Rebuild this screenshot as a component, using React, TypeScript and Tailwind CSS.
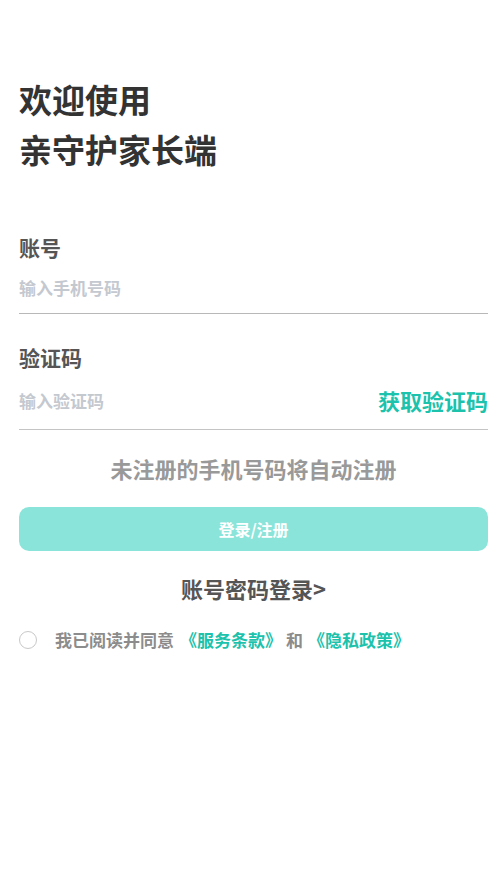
import React from 'react';

const font = { fontFamily: '"Noto Sans CJK SC", "Noto Sans", sans-serif' };

export default function App() {
  return (
    <div className="min-h-[883px] w-full bg-white pl-[19px] pr-[9px]" style={font}>
      {/* Title */}
      <div className="pt-[74px] text-[33px] leading-[50px] font-bold text-[#333]">
        <div>欢迎使用</div>
        <div>亲守护家长端</div>
      </div>

      {/* Account */}
      <div className="mt-[58px]">
        <div className="text-[21px] leading-[30px] font-bold text-[#555]">账号</div>
        <div className="flex items-center h-[52px] border-b border-[#b8b8b8]">
          <span className="text-[17px] font-bold text-[#c4c8cf]">输入手机号码</span>
        </div>
      </div>

      {/* Code */}
      <div className="mt-[28px]">
        <div className="text-[21px] leading-[30px] font-bold text-[#555]">验证码</div>
        <div className="flex items-center justify-between h-[58px] border-b border-[#c4c4c4]">
          <span className="text-[17px] font-bold text-[#c4c8cf]">输入验证码</span>
          <span className="text-[22px] font-bold text-[#1cc2ab]">获取验证码</span>
        </div>
      </div>

      <div className="mt-[22px] text-center text-[22px] leading-[32px] font-bold text-[#999]">
        未注册的手机号码将自动注册
      </div>

      <button className="mt-[23px] w-full h-[44px] rounded-[10px] bg-[#8ae4d9] text-white text-[16px] font-bold">
        登录/注册
      </button>

      <div className="mt-[21px] text-center text-[22px] leading-[32px] font-bold text-[#555]">
        账号密码登录&gt;
      </div>

      <div className="mt-[23px] flex items-center text-[17px] font-bold">
        <span className="w-[18px] h-[18px] rounded-full border border-[#c8c8c8]" />
        <span className="ml-[18px] text-[#8c8c8c]">我已阅读并同意</span>
        <span className="ml-[6px] text-[#1cc2ab]">《服务条款》</span>
        <span className="ml-[4px] text-[#8c8c8c]">和</span>
        <span className="ml-[5px] text-[#1cc2ab]">《隐私政策》</span>
      </div>
    </div>
  );
}
